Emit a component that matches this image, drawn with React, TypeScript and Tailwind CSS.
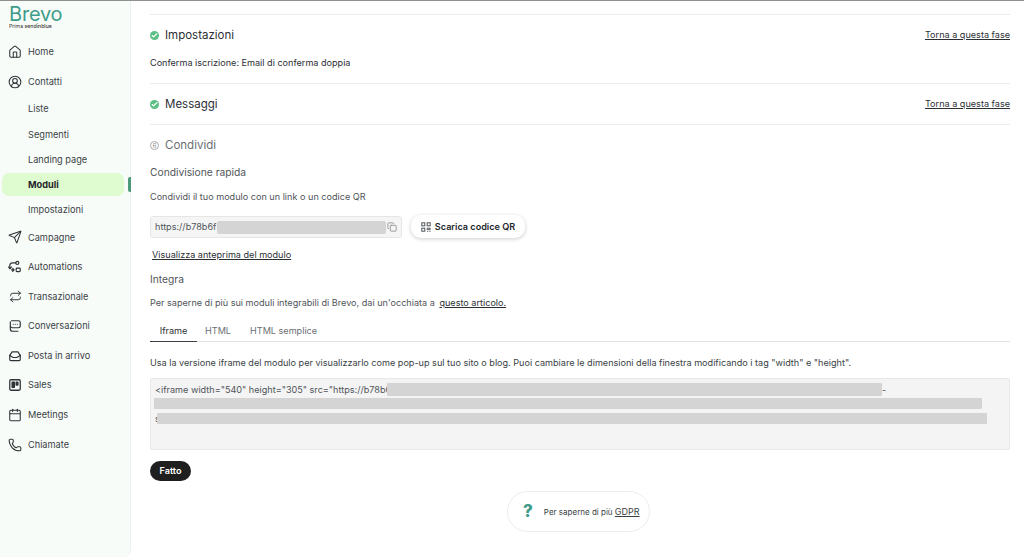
import React from "react";
import { Home, CircleUserRound, Send, Repeat, Calendar, Phone, Copy, Check } from "lucide-react";

function Flow() {
  return (
    <svg viewBox="0 0 24 24" className="w-[14px] h-[14px]" fill="none" stroke="currentColor" strokeWidth="2" strokeLinecap="round" strokeLinejoin="round">
      <circle cx="16" cy="5" r="2.6" />
      <rect x="14" y="14" width="7" height="6" rx="1.5" />
      <path d="M13 5H8a5 5 0 0 0-5 5v4" />
      <path d="M1 12l2 3 3-3" />
      <path d="M10 17H6M8 14.5 10.500 17 8 19.500" />
    </svg>
  );
}
function Inbox() {
  return (
    <svg viewBox="0 0 24 24" className="w-[14px] h-[14px]" fill="none" stroke="currentColor" strokeWidth="2" strokeLinecap="round" strokeLinejoin="round">
      <path d="M3 11 7 5h10l4 6v7a2 2 0 0 1-2 2H5a2 2 0 0 1-2-2z" />
      <path d="M3 11l6 3.500h6l6-3.500" />
    </svg>
  );
}
function Board() {
  return (
    <svg viewBox="0 0 24 24" className="w-[14px] h-[14px]" fill="none" stroke="currentColor" strokeWidth="2.200" strokeLinejoin="round">
      <rect x="3" y="3" width="18" height="18" rx="2" />
      <rect x="7" y="7" width="4" height="9" fill="currentColor" />
      <rect x="14" y="7" width="3" height="5" fill="currentColor" />
    </svg>
  );
}
function Chat() {
  return (
    <svg viewBox="0 0 24 24" className="w-[14px] h-[14px]" fill="none" stroke="currentColor" strokeWidth="2" strokeLinecap="round" strokeLinejoin="round">
      <path d="M6 3h12a3 3 0 0 1 3 3v6a3 3 0 0 1-3 3H7a3 3 0 0 1-3-3V5" />
      <path d="M4 12v5a4 4 0 0 0 4 4h9" />
      <path d="M9 9h.01M12.500 9h.01M16 9h.01" />
    </svg>
  );
}
function Qr() {
  return (
    <svg viewBox="0 0 10 10" className="w-[10px] h-[10px]" fill="none" stroke="#50555a" strokeWidth="1">
      <rect x="0.800" y="0.800" width="3" height="3" />
      <rect x="6.200" y="0.800" width="3" height="3" />
      <rect x="0.800" y="6.200" width="3" height="3" />
      <path d="M6.200 6.200h3v1.500h-3zM6.200 9.400h1M8.500 9.400h1" />
    </svg>
  );
}

function NavItem({ icon, label, h = "h-[29.600px]" }: { icon: React.ReactNode; label: string; h?: string }) {
  return (
    <div className={`${h} flex items-center pl-[8px] gap-[6px] text-[#3a3f45]`}>
      <span className="w-[14px] flex justify-center text-[#2f3337]">{icon}</span>
      <span className="text-[9.200px]">{label}</span>
    </div>
  );
}

function SubItem({ label, active }: { label: string; active?: boolean }) {
  return (
    <div className="relative h-[25.200px] flex items-center">
      <div className={`ml-[2px] w-[122px] h-[23px] rounded-[7px] flex items-center pl-[26px] text-[9.200px] ${active ? "bg-[#dffcd0] font-bold text-[#1f2328]" : "text-[#3a3f45]"}`}>
        {label}
      </div>
      {active && <div className="absolute left-[128px] top-[5px] w-[3px] h-[15px] rounded-l-[2px] bg-[#4c9a78]" />}
    </div>
  );
}

function Done({ title }: { title: string }) {
  return (
    <div className="flex items-center justify-between h-[20px]">
      <div className="flex items-center gap-[6px]">
        <span className="w-[9px] h-[9px] rounded-full bg-[#5cbf85] flex items-center justify-center">
          <Check className="w-[7px] h-[7px] text-white" strokeWidth={4} />
        </span>
        <span className="pt-[1px] text-[11.500px] text-[#2c3035]">{title}</span>
      </div>
      <a className="text-[9.100px] text-[#2c3035] underline">Torna a questa fase</a>
    </div>
  );
}

export default function App() {
  return (
    <div className="w-[1024px] h-[557px] overflow-hidden bg-white flex flex-col text-[#3a3f45] [font-family:Inter,sans-serif]">
      <div className="h-[1px] bg-[#8f8f8f] shrink-0" />
      <div className="flex flex-1 min-h-0">
        <aside className="w-[131px] shrink-0 bg-[#f8fcf9] border-r border-[#eef0ee] rounded-br-[8px]">
          <div className="h-[30px] pl-[9px] pt-[3px] relative">
            <div className="text-[20px] leading-[20px] text-[#3f9c8a] tracking-[-0.200px]">Brevo</div>
            <div className="absolute left-[9px] top-[23px] text-[5.200px] leading-[5px] text-[#333]">Prima <span className="font-medium">sendinblue</span></div>
          </div>
          <div className="pt-[6.500px]">
            <NavItem icon={<Home className="w-[14px] h-[14px]" strokeWidth={1.800} />} label="Home" />
            <NavItem icon={<CircleUserRound className="w-[14px] h-[14px]" strokeWidth={1.800} />} label="Contatti" />
            <div>
              <SubItem label="Liste" />
              <SubItem label="Segmenti" />
              <SubItem label="Landing page" />
              <SubItem label="Moduli" active />
              <SubItem label="Impostazioni" />
            </div>
            <div>
              <NavItem icon={<Send className="w-[14px] h-[14px]" strokeWidth={1.800} />} label="Campagne" />
              <NavItem icon={<Flow />} label="Automations" />
              <NavItem icon={<Repeat className="w-[13px] h-[13px]" strokeWidth={1.800} />} label="Transazionale" />
              <NavItem icon={<Chat />} label="Conversazioni" />
              <NavItem icon={<Inbox />} label="Posta in arrivo" />
              <NavItem icon={<Board />} label="Sales" />
              <NavItem icon={<Calendar className="w-[14px] h-[14px]" strokeWidth={1.800} />} label="Meetings" />
              <NavItem icon={<Phone className="w-[14px] h-[14px]" strokeWidth={1.800} />} label="Chiamate" />
            </div>
          </div>
        </aside>
        <main className="flex-1 pl-[19px] pr-[14px]">
          <div className="h-[14px] border-b border-[#ececec]" />
          <div className="pt-[10px]"><Done title="Impostazioni" /></div>
          <div className="pt-[11px] text-[9.100px] leading-[14px] text-[#2c3035]">Conferma iscrizione: Email di conferma doppia</div>
          <div className="mt-[13px] border-b border-[#ececec]" />
          <div className="pt-[10px] pb-[10px] border-b border-[#ececec]"><Done title="Messaggi" /></div>

          <div className="pt-[10px] h-[31px] flex items-center gap-[6px]">
            <span className="w-[9px] h-[9px] rounded-full border border-[#a9a9a9] text-[6px] leading-none flex items-center justify-center text-[#8a8a8a]">6</span>
            <span className="text-[11.500px] text-[#6b6f73]">Condividi</span>
          </div>

          <div className="pt-[8px] text-[10.250px] leading-[16px] text-[#50555a]">Condivisione rapida</div>
          <div className="pt-[10px] text-[9.100px] leading-[14px] text-[#50555a]">Condividi il tuo modulo con un link o un codice QR</div>

          <div className="pt-[11px] flex items-center gap-[9px]">
            <div className="relative w-[252px] h-[22px] bg-[#f5f5f5] border border-[#e6e6e6] rounded-[3px] flex items-center justify-between pl-[4px] pr-[4px] text-[9.100px] text-[#50555a]">
              <span>https://b78b6f</span>
              <Copy className="w-[10px] h-[10px] text-[#8a8a8a]" />
              <div className="absolute left-[66px] top-[4px] w-[169px] h-[13px] rounded-[2px] bg-[#d4d4d4]" />
            </div>
            <button className="w-[114px] h-[23px] rounded-[10px] bg-white shadow-[0_1px_4px_rgba(0,0,0,0.2)] flex items-center justify-center gap-[4px] text-[9.100px] font-semibold text-[#23272b]">
              <Qr />
              Scarica codice QR
            </button>
          </div>

          <div className="pl-[2px] pt-[10px] text-[9.100px] leading-[14px] text-[#2c3035] underline">Visualizza anteprima del modulo</div>
          <div className="pt-[9px] text-[10.250px] leading-[16px] text-[#50555a]">Integra</div>
          <div className="pt-[9px] text-[9.100px] leading-[14px] text-[#50555a]">
            Per saperne di più sui moduli integrabili di Brevo, dai un'occhiata a <a className="ml-[2px] text-[#2c3035] underline">questo articolo.</a>
          </div>

          <div className="mt-[10px] h-[22px] border-b border-[#e2e2e2] flex text-[9.100px] text-[#6b6f73]">
            <div className="w-[47px] flex items-center justify-center text-[#2c3035] border-b border-[#3a3f45] h-[22px]">Iframe</div>
            <div className="ml-[8px] flex items-center">HTML</div>
            <div className="ml-[19px] flex items-center">HTML semplice</div>
          </div>

          <div className="pt-[14px] text-[9.100px] leading-[14px] text-[#3a3f45]">Usa la versione iframe del modulo per visualizzarlo come pop-up sul tuo sito o blog. Puoi cambiare le dimensioni della finestra modificando i tag "width" e "height".</div>

          <div className="relative mt-[8px] h-[72px] bg-[#f4f4f4] border border-[#e8e8e8] rounded-[2px] pl-[4px] pt-[3px] text-[9.100px] leading-[15px] text-[#50555a]">
            <div>&lt;iframe width="540" height="305" src="https://b78b6</div>
            <div className="absolute left-[236px] top-[4px] w-[495px] h-[13px] bg-[#d4d4d4] rounded-[1px]" />
            <div className="absolute left-[731px] top-[3px]">-</div>
            <div className="absolute left-[4px] top-[32px]">s</div>
            <div className="absolute left-[3px] top-[19px] w-[828px] h-[11px] bg-[#d4d4d4] rounded-[1px]" />
            <div className="absolute left-[6px] top-[34px] w-[830px] h-[11px] bg-[#d4d4d4] rounded-[1px]" />
          </div>

          <button className="mt-[11px] block w-[41px] h-[20px] rounded-[10px] bg-[#1f1f1f] text-white text-[9.100px] font-semibold">Fatto</button>

          <div className="mt-[10px] ml-[357px] w-[143px] h-[41px] rounded-[21px] bg-white border border-[#ececec] flex items-center pl-[15px] gap-[11px]">
            <span className="text-[17px] font-extrabold text-[#3f9c8a] leading-none">?</span>
            <span className="text-[8px] text-[#3a3f45]">Per saperne di più <a className="text-[9px] underline">GDPR</a></span>
          </div>
        </main>
      </div>
    </div>
  );
}
